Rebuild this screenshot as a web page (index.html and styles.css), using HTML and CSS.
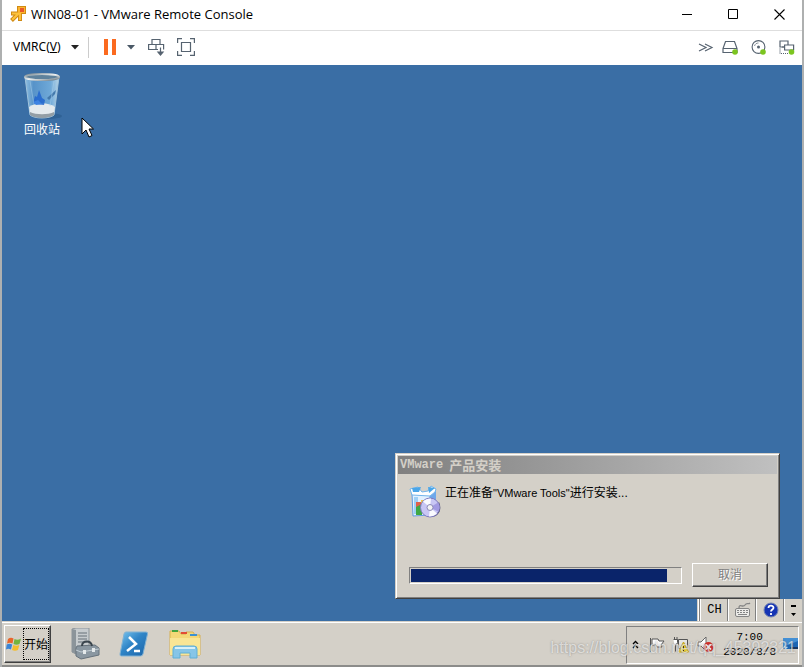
FILE: index.html
```html
<!DOCTYPE html>
<html lang="zh-CN">
<head>
<meta charset="utf-8">
<title>WIN08-01 - VMware Remote Console</title>
<link rel="stylesheet" href="styles.css">
</head>
<body>
<div class="console">
  <header class="titlebar">
    <svg class="app-icon" width="18" height="18" viewBox="0 0 18 18" aria-hidden="true">
      <g fill="none" stroke="#d08a12" stroke-width="4"><path d="M2 8.500h9V16M2.500 15.500l8-8"/></g>
      <path d="M8 1h9v8H8z" fill="#d08a12"/>
      <g fill="none" stroke="#fcc23c" stroke-width="2.200"><path d="M3 8.500h8v6.500M3.200 14.800L11 7"/></g>
      <path d="M9 2h7v6H9z" fill="#fcb52f"/>
      <rect x="11" y="3" width="4" height="4" fill="#e8582a"/>
    </svg>
    <h1 class="title">WIN08-01 - VMware Remote Console</h1>
    <div class="window-controls">
      <button class="win-btn" aria-label="最小化"><svg width="11" height="11" viewBox="0 0 11 11"><path d="M0 5.500h10" stroke="#000"/></svg></button>
      <button class="win-btn" aria-label="最大化"><svg width="11" height="11" viewBox="0 0 11 11"><path d="M.5.5h9v9h-9z" fill="none" stroke="#000"/></svg></button>
      <button class="win-btn" aria-label="关闭"><svg width="11" height="11" viewBox="0 0 11 11"><path d="M.5.5l10 10M10.500.5l-10 10" stroke="#000" stroke-width="1.100"/></svg></button>
    </div>
  </header>

  <nav class="toolbar">
    <button class="menu-btn"><span>VMRC(<u>V</u>)</span><svg width="8" height="5" viewBox="0 0 8 5"><path d="M0 0h8L4 4.500z" fill="#222"/></svg></button>
    <span class="divider"></span>
    <button class="tool pause" aria-label="挂起"><svg width="13" height="16" viewBox="0 0 13 16"><path d="M0 0h4v16H0zM8 0h4v16H8z" fill="#fb6a1f"/></svg></button>
    <button class="tool drop" aria-label="电源选项"><svg width="8" height="5" viewBox="0 0 8 5"><path d="M0 0h8L4 4.500z" fill="#4a5866"/></svg></button>
    <button class="tool send" aria-label="发送 Ctrl+Alt+Del"><svg width="17" height="17" viewBox="0 0 17 17" fill="none" stroke="#566370" stroke-width="1.200"><path d="M4 5.500v-5h8v5M10 10.500H.6v-5h15v5M8 5.500v5M12.500 8.500V15"/><path d="M10 13l2.500 3 2.500-3z" fill="#566370"/></svg></button>
    <button class="tool full" aria-label="全屏"><svg width="18" height="18" viewBox="0 0 18 18" fill="none" stroke="#566370" stroke-width="1.200"><path d="M.6 5V.6H5M13 .6h4.400V5M17.400 13v4.400H13M5 17.400H.6V13M4.500 4.500h9v9h-9z"/></svg></button>
    <div class="devices">
      <button class="tool more" aria-label="更多"><svg width="16" height="9" viewBox="0 0 16 9" fill="none" stroke="#566370" stroke-width="1.200"><path d="M1 1l7 3.500L1 8M7 1l7 3.500L7 8"/></svg></button>
      <button class="tool" aria-label="硬盘"><svg width="17" height="15" viewBox="0 0 17 15"><path d="M3.500 1.500h9l2.500 7v4H1v-4zM1 8.500h14" fill="none" stroke="#566370" stroke-width="1.200"/><circle cx="13" cy="12" r="2.800" fill="#7cc520"/></svg></button>
      <button class="tool" aria-label="光驱"><svg width="16" height="15" viewBox="0 0 16 15"><circle cx="7.500" cy="7" r="6.400" fill="none" stroke="#566370" stroke-width="1.100"/><circle cx="7.500" cy="7" r="1.500" fill="#566370"/><path d="M3.500 6c.6-2 2-3 4-3" fill="none" stroke="#88929b"/><circle cx="12" cy="12" r="2.800" fill="#7cc520"/></svg></button>
      <button class="tool" aria-label="网络"><svg width="16" height="15" viewBox="0 0 16 15"><g fill="none" stroke="#566370" stroke-width="1.200"><path d="M5 7H1V1h8v4"/><path d="M5.600 5h9v5h-9zM3 7h3"/><path d="M1 8.500v5h9" stroke-dasharray="1 1"/></g><circle cx="12.500" cy="12" r="2.800" fill="#7cc520"/></svg></button>
    </div>
  </nav>

  <main class="desktop">
    <div class="desktop-icon">
      <svg width="42" height="48" viewBox="0 0 42 48" aria-hidden="true">
        <defs>
          <linearGradient id="bin" x2="1"><stop stop-color="#91bfe0"/><stop offset=".25" stop-color="#5793c9"/><stop offset=".75" stop-color="#6fa9d8"/><stop offset="1" stop-color="#b8d5e7"/></linearGradient>
          <linearGradient id="rim" x2="1" y2="1"><stop stop-color="#74858f"/><stop offset=".5" stop-color="#eff2f2"/><stop offset="1" stop-color="#697780"/></linearGradient>
        </defs>
        <ellipse cx="27" cy="44" rx="14" ry="3" fill="#285a8b" opacity=".6"/>
        <path d="M4 5l5 38c4 4 20 4 24 0l5-38z" fill="url(#bin)" stroke="#9fc3dc"/>
        <path d="M8 35c7-5 19-5 26 0l-1 7c-6 4-18 4-24 0z" fill="#e4eaed"/>
        <path d="M9 40c6 3 18 3 24 0v3c-5 4-19 4-24 0z" fill="#939ea5"/>
        <path d="M12 31l2-7 2 1 2-7 3 8 3 2-1 5-9-1z" fill="#2165ce" opacity=".85"/><path d="M12 30l5-2 4 4-6 1z" fill="#3d83e2"/>
        <path d="M26 26l9-8-1 4-6 6z" fill="#4379ac"/>
        <path d="M9 9l4 24M33 9l-4 25" stroke="#a9d1ec" opacity=".5"/>
        <ellipse cx="21" cy="5" rx="17" ry="3" fill="#5f829c" stroke="url(#rim)" stroke-width="2"/>
      </svg>
      <span>回收站</span>
    </div>
    <svg class="cursor" width="13" height="21" viewBox="0 0 13 21" aria-hidden="true"><path d="M1 1v16l4-4 3 7 3-1.500L8 12h4.500z" fill="#fff" stroke="#000"/></svg>

    <section class="dialog" role="dialog" aria-labelledby="dlg-title">
      <h2 class="dialog-title" id="dlg-title"><span class="latin">VMware</span>产品安装</h2>
      <div class="dialog-message">
        <svg width="32" height="34" viewBox="0 0 32 34" aria-hidden="true">
          <path d="M3 9h18v21L4 31z" fill="#e2f1ff" stroke="#5f9be0"/>
          <path d="M21 9l6-4v20l-6 5z" fill="#6fa8ea"/>
          <path d="M3 10L1 4l8-2 4 5 6-1 3-5 5 3-1 3-5 4z" fill="#fff" stroke="#73b5ec"/>
          <path d="M3 3l9-1-2 5H4zM19 2l7 1-6 5z" fill="#4ba6e8"/>
          <path d="M5 12h4v17H5z" fill="#9fd0f6"/>
          <path d="M7 17h5v6H7z" fill="#e0604a"/><path d="M7 22l6-3v11H7z" fill="#3fa845"/><path d="M12 15h5v5h-5z" fill="#f0c84a"/>
          <path d="M30 17c3 6 1 14-7 15l-5-1z" fill="#4c4a70"/>
          <circle cx="21" cy="22.500" r="9.500" fill="#c8c6f4" stroke="#7f7cc0"/>
          <path d="M21 22.500l-7-6c2-2 5-3 8-3zM21 22.500l7 6c-2 2-5 3-8 3z" fill="#fafaff"/>
          <path d="M21 22.500l8-5c2 3 2 6 0 9z" fill="#a29ae2"/>
          <circle cx="21" cy="22.500" r="3" fill="#f3f3f4" stroke="#8b89b8"/>
        </svg>
        <p>正在准备<span class="product">"VMware Tools"</span>进行安装...</p>
      </div>
      <div class="dialog-actions">
        <div class="progress" role="progressbar" aria-label="安装进度" aria-valuenow="95" aria-valuemin="0" aria-valuemax="100"><div class="progress-fill" style="width:95%"></div></div>
        <button class="cancel" disabled>取消</button>
      </div>
    </section>

    <div class="langbar">
      <button class="lang">CH</button>
      <button aria-label="键盘"><svg width="18" height="16" viewBox="0 0 18 16" fill="none" stroke="#858585"><path d="M5 6c0-5 4 0 6-3s3 0 5-2" stroke-width="1.300"/><rect x="1.500" y="6.500" width="14" height="8" rx="1.500" fill="#ecebe8"/><path d="M3 8.500h11M3 10.500h11" stroke-dasharray="2 1"/><path d="M4 12.500h9"/></svg></button>
      <button aria-label="帮助"><svg width="16" height="16" viewBox="0 0 16 16"><circle cx="8" cy="8" r="7" fill="#1634b4" stroke="#7484b0"/><path d="M5.500 6c0-3 5-3 5-.3 0 1.800-2.500 1.800-2.500 3.800M8 11v2" fill="none" stroke="#fff" stroke-width="1.800"/></svg></button>
      <button class="lang-more" aria-label="选项"><svg width="7" height="13" viewBox="0 0 7 13"><path d="M1 1h5v2H1zM1 9h5l-2.500 3z"/></svg></button>
    </div>
  </main>

  <footer class="taskbar">
    <button class="start"><svg width="16" height="16" viewBox="0 0 16 16" aria-hidden="true"><path d="M2 3c2-1.500 3.500-1.500 5.500-.5L6.500 7.500C4.500 6.500 3 6.500 1 7.500z" fill="#e8652b"/><path d="M8.500 3c2 1 4 1 6.500-.5L13.500 8c-2 1-4 1-6 0z" fill="#72b43c"/><path d="M.700 8.500c2-1 3.500-1 5.500 0L5 13.500c-2-1-3.500-1-5 0z" fill="#3a84d5"/><path d="M7.300 9c2 1 4 1 6 0L12 14c-2 1-4 1-6 0z" fill="#f3bd2c"/></svg><span>开始</span></button>
    <div class="launchers">
      <button aria-label="服务器管理器"><svg width="30" height="32" viewBox="0 0 30 32"><path d="M2 1l4-1h13v26H6l-4-2z" fill="#c6cbce" stroke="#8c949a"/><path d="M2 1l4 1v24l-4-2z" fill="#8b949a"/><path d="M8 5h9M8 8h9M8 11h9M8 14h9" stroke="#667179"/><path d="M7 18l18-1 4 3v7l-18 4-5-3v-8z" fill="#8a97a1" stroke="#66727c"/><path d="M12 18c0-6 9-6 10 0" fill="none" stroke="#39444d" stroke-width="2"/><path d="M6 22l5 2 18-3" fill="none" stroke="#c2cdd4"/><path d="M13 22h3v4h-3zM22 20h3v4h-3z" fill="#e4e9eb"/></svg></button>
      <button aria-label="PowerShell"><svg width="30" height="26" viewBox="0 0 30 26"><defs><linearGradient id="ps" x2="1" y2="1"><stop stop-color="#79c5ef"/><stop offset=".45" stop-color="#3085c7"/><stop offset="1" stop-color="#1b63a8"/></linearGradient></defs><path d="M7 1h20q2 0 1.500 2L24 23q-.5 2-2.500 2h-19q-2 0-1.500-2L5 3q.5-2 2-2z" fill="url(#ps)" stroke="#81b2d4"/><path d="M10 6l7 7-9 7M15 20h6" fill="none" stroke="#fff" stroke-width="2.500"/></svg></button>
      <button aria-label="资源管理器"><svg width="34" height="32" viewBox="0 0 34 32"><path d="M2 3h9l2 3h5V4h7l2 3h5v20H2z" fill="#f4d878" stroke="#d6b052"/><path d="M4 2h6v2H4z" fill="#44a33e"/><path d="M13 4h6v2h-6z" fill="#e34b34"/><path d="M22 6h7v2h-7z" fill="#3d91d2"/><path d="M2 10h30v17H2z" fill="#f9e595"/><path d="M5 30v-9q0-3 3-3h18q3 0 3 3v9h-7v-5H12v5z" fill="#86c5e7" stroke="#5fafd6"/><path d="M7 20h20" stroke="#d8f0f8" stroke-width="2"/></svg></button>
    </div>
    <div class="tray">
      <button class="expand" aria-label="显示隐藏的图标"><svg width="7" height="9" viewBox="0 0 7 9" fill="none" stroke="#000" stroke-width="1.300"><path d="M1 4l2.500-2.500L6 4M1 8l2.500-2.500L6 8"/></svg></button>
      <button aria-label="操作中心"><svg width="16" height="17" viewBox="0 0 16 17"><path d="M1.500 2v14M3 3h6l1 2h5l-3 4 1 2H8L7 9H3z" fill="#fff" stroke="#555"/></svg></button>
      <button aria-label="网络"><svg width="18" height="17" viewBox="0 0 18 17"><path d="M6.500 3.500h9v9h-9z" fill="#e6e6e3" stroke="#555"/><path d="M1.500 3.500h4v3q0 2-2 2v7M2.500 4V1M5 4V1" fill="#fff" stroke="#555"/><path d="M11.500 6l5 10h-10z" fill="#f9da28" stroke="#c7a51c"/><path d="M11.500 10v3M11.500 14v1" stroke="#222"/></svg></button>
      <button aria-label="音量"><svg width="17" height="17" viewBox="0 0 17 17"><path d="M1 6h3l5-5v14l-5-5H1z" fill="#fff" stroke="#666"/><circle cx="11.500" cy="11" r="5" fill="#d42e28"/><path d="M9 8.500l5 5M14 8.500l-5 5" stroke="#fff" stroke-width="1.600"/></svg></button>
      <time class="clock" datetime="2020-08-08T07:00"><span>7:00</span><span>2020/8/8</span></time>
      <button aria-label="显示桌面"><svg width="15" height="15" viewBox="0 0 15 15"><path d="M0 1h15v11H0z" fill="#1d66b4"/><path d="M0 1h15v3L0 10z" fill="#4490d5"/><path d="M7 10h8v2H7z" fill="#173765"/><path d="M1 9l4 1-3 3z" fill="#b5dbef"/></svg></button>
    </div>
  </footer>
  <span class="watermark">https://blog.csdn.net/qq_45392321</span>
</div>
</body>
</html>
```
FILE: styles.css
```css
* { box-sizing: border-box; }

body {
  margin: 0;
  background: #aeb0b0;
  color: #000;
  font: 12px/16px "Noto Sans", "Noto Sans CJK SC", sans-serif;
}

button {
  display: flex;
  align-items: center;
  justify-content: center;
  margin: 0;
  padding: 0;
  border: 0;
  background: none;
  color: inherit;
  font: inherit;
}

svg { display: block; flex: none; }

.console {
  position: relative;
  display: flex;
  flex-direction: column;
  min-height: 100vh;
  margin: 0 2px;
  border-bottom: 2px solid #8c8c8a;
}

/* Client window */
.titlebar {
  display: flex;
  align-items: center;
  height: 31px;
  padding-left: 7px;
  border-bottom: 1px solid #dedede;
  background: #fff;
}

.app-icon { margin-bottom: 2px; }

.title {
  flex: 1;
  margin: 0 0 2px 4px;
  font-family: "Open Sans", sans-serif;
  font-size: 13px;
  font-weight: 400;
}

.window-controls { display: flex; margin-bottom: 2px; }
.win-btn { width: 46px; height: 28px; }

.toolbar {
  display: flex;
  align-items: center;
  height: 34px;
  padding: 0 7px 2px 11px;
  background: #fff;
}

.menu-btn { gap: 10px; }
.divider { width: 1px; height: 21px; margin: 0 15px 0 9px; background: #ccc; }
.drop { margin: 0 13px 0 10px; }
.full { margin-left: 12px; }
.devices { display: flex; align-items: center; gap: 12px; margin-left: auto; }
.more { margin-right: -4px; }

/* Guest desktop */
.desktop {
  position: relative;
  flex: 1;
  min-height: 240px;
  background: #3a6ea5;
}

.desktop-icon {
  display: flex;
  flex-direction: column;
  align-items: center;
  width: 80px;
  padding-top: 7px;
  color: #fff;
  font-family: "Noto Sans CJK SC", sans-serif;
}

.desktop-icon span { margin-top: 1px; }

.cursor { position: absolute; top: 52px; left: 79px; }

.dialog {
  position: absolute;
  right: 22px;
  bottom: 22px;
  width: 385px;
  padding: 2px;
  border: 1px solid;
  border-color: #d4d0c8 #404040 #404040 #d4d0c8;
  background: #d4d0c8;
  box-shadow: inset 1px 1px #fff, inset -1px -1px #808080;
  font-family: "Liberation Sans", "Noto Sans CJK SC", sans-serif;
}

.dialog-title {
  display: flex;
  gap: 6px;
  height: 18px;
  margin: 0;
  padding: 0 2px;
  background: linear-gradient(90deg, #808080, #c0c0c0);
  color: #d4d0c8;
  font: 700 13px/18px "Noto Sans CJK SC", sans-serif;
}

.latin { font-family: "Liberation Mono", monospace; font-size: 12px; }

.dialog-message {
  display: flex;
  gap: 4px;
  padding: 11px 11px 0;
}

.dialog-message p { margin: 0; }
.product { font-size: 11px; }

.dialog-actions {
  display: flex;
  align-items: center;
  gap: 10px;
  padding: 44px 9px 9px 11px;
}

.progress {
  flex: 1;
  height: 17px;
  padding: 1px;
  border: 1px solid;
  border-color: #808080 #fff #fff #808080;
}

.progress-fill { height: 100%; background: #0a246a; }

.cancel {
  width: 76px;
  height: 24px;
  border: 1px solid;
  border-color: #fff #404040 #404040 #fff;
  box-shadow: inset -1px -1px #808080;
  color: #808080;
  text-shadow: 1px 1px #fff;
}

.langbar {
  position: absolute;
  right: 0;
  bottom: 0;
  display: flex;
  height: 22px;
  padding-left: 2px;
  border-left: 1px solid #d4d0c8;
  background: #d4d0c8;
  box-shadow: inset 1px 0 #fff;
}

.langbar button { width: 28px; border-left: 1px solid #fff; box-shadow: -1px 0 #808080; }
.langbar .lang { font: 12px "Liberation Mono", monospace; }
.langbar .lang-more { width: 18px; }

/* Guest taskbar */
.taskbar {
  display: flex;
  align-items: center;
  height: 44px;
  padding: 0 3px 0 2px;
  border-top: 1px solid #d4d0c8;
  background: #d4d0c8;
  box-shadow: inset 0 1px #fff;
  font-family: "Noto Sans CJK SC", sans-serif;
}

.start {
  gap: 1px;
  width: 47px;
  height: 38px;
  margin-top: 1px;
  border: 1px solid;
  border-color: #fff #404040 #404040 #fff;
  box-shadow: inset -1px -1px #808080;
}

.start span {
  height: 32px;
  border: 1px dotted #000;
  line-height: 30px;
}

.launchers { display: flex; align-items: center; gap: 19px; margin-left: 19px; }

.tray {
  display: flex;
  align-items: center;
  gap: 7px;
  height: 38px;
  margin: 2px 0 0 auto;
  padding-left: 5px;
  border: 1px solid;
  border-color: #808080 #fff #fff #808080;
}

.expand { margin-right: 3px; }

.clock {
  display: flex;
  flex-direction: column;
  align-items: center;
  margin-left: 2px;
  font: 11px/15px "Liberation Mono", monospace;
}

.watermark {
  position: absolute;
  right: 6px;
  bottom: 7px;
  color: rgba(255, 255, 255, .6);
  font: 16px/20px "Liberation Sans", sans-serif;
  text-shadow: 0 0 2px rgba(90, 90, 90, .6);
  pointer-events: none;
}
```
